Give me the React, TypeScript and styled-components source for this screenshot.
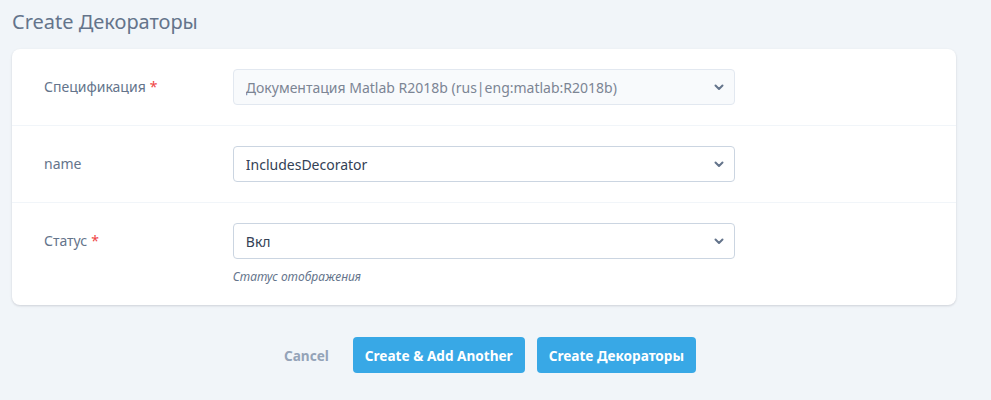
import React, { useState } from 'react';
import styled, { createGlobalStyle } from 'styled-components';

const GlobalStyle = createGlobalStyle`
  body {
    margin: 0;
    background: #f1f5f9;
    font-family: "Noto Sans", "Open Sans", sans-serif;
    color: #334155;
  }
`;

const Page = styled.div`
  padding: 10px 35px 0 12px;
  width: 944px;
`;

const Title = styled.h1`
  margin: 0 0 15px;
  font-size: 20px;
  font-weight: 400;
  line-height: 24px;
  color: #64748b;
`;

const Card = styled.div`
  background: #fff;
  border-radius: 8px;
  box-shadow: 0 1px 3px rgba(15, 23, 42, 0.1), 0 1px 2px rgba(15, 23, 42, 0.06);
`;

const Row = styled.div`
  display: flex;
  border-top: 1px solid #f1f5f9;
  &:first-child {
    border-top: none;
  }
`;

const LabelCol = styled.div`
  width: 20%;
  box-sizing: border-box;
  padding: 20px 32px 0;
  line-height: 34px;
`;

const Label = styled.label`
  font-size: 14px;
  color: #64748b;
`;

const Required = styled.span`
  color: #ef4444;
  margin-left: 4px;
`;

const FieldCol = styled.div`
  width: 60%;
  box-sizing: border-box;
  padding: 20px 32px;
`;

const SelectWrap = styled.div`
  position: relative;
`;

const Select = styled.select<{ $disabled?: boolean }>`
  appearance: none;
  display: block;
  width: 100%;
  height: 36px;
  box-sizing: border-box;
  padding: 0 36px 0 12px;
  border-radius: 4px;
  font-family: inherit;
  font-size: 14px;
  opacity: 1;
  color: ${p => (p.$disabled ? '#7c8594' : '#334155')};
  background: ${p => (p.$disabled ? '#f8fafc' : '#fff')};
  border: 1px solid ${p => (p.$disabled ? '#e2e8f0' : '#cbd5e1')};
  outline: none;
`;

const Chevron = styled.svg`
  position: absolute;
  right: 10px;
  top: 12px;
  pointer-events: none;
`;

const Help = styled.div`
  margin-top: 10px;
  font-size: 12px;
  font-style: italic;
  color: #64748b;
  line-height: 16px;
`;

const Actions = styled.div`
  display: flex;
  justify-content: center;
  align-items: center;
  gap: 12px;
  padding-top: 32px;
`;

const CancelButton = styled.button`
  background: none;
  border: none;
  font-family: inherit;
  font-size: 13.6px;
  font-weight: 700;
  color: #94a3b8;
  padding: 0 12px;
  height: 36px;
  cursor: pointer;
`;

const PrimaryButton = styled.button`
  background: #38a8e6;
  border: none;
  border-radius: 4px;
  font-family: inherit;
  font-size: 13.6px;
  font-weight: 700;
  color: #fff;
  height: 36px;
  padding: 0 12px;
  cursor: pointer;
`;

const ChevronIcon = () => (
  <Chevron width="12" height="12" viewBox="0 0 12 12">
    <path d="M2.5 4.5 L6 8 L9.5 4.5" fill="none" stroke="#64748b" strokeWidth="2" strokeLinecap="round" strokeLinejoin="round" />
  </Chevron>
);

const App = () => {
  const [name, setName] = useState('IncludesDecorator');
  const [status, setStatus] = useState('Вкл');

  return (
    <>
      <GlobalStyle />
      <Page>
        <Title>Create Декораторы</Title>
        <Card>
          <Row>
            <LabelCol>
              <Label>Спецификация<Required>*</Required></Label>
            </LabelCol>
            <FieldCol>
              <SelectWrap>
                <Select $disabled disabled>
                  <option>Документация Matlab R2018b (rus|eng:matlab:R2018b)</option>
                </Select>
                <ChevronIcon />
              </SelectWrap>
            </FieldCol>
          </Row>
          <Row>
            <LabelCol>
              <Label>name</Label>
            </LabelCol>
            <FieldCol>
              <SelectWrap>
                <Select value={name} onChange={e => setName(e.target.value)}>
                  <option>IncludesDecorator</option>
                </Select>
                <ChevronIcon />
              </SelectWrap>
            </FieldCol>
          </Row>
          <Row>
            <LabelCol>
              <Label>Статус<Required>*</Required></Label>
            </LabelCol>
            <FieldCol>
              <SelectWrap>
                <Select value={status} onChange={e => setStatus(e.target.value)}>
                  <option>Вкл</option>
                  <option>Выкл</option>
                </Select>
                <ChevronIcon />
              </SelectWrap>
              <Help>Статус отображения</Help>
            </FieldCol>
          </Row>
        </Card>
        <Actions>
          <CancelButton>Cancel</CancelButton>
          <PrimaryButton>Create &amp; Add Another</PrimaryButton>
          <PrimaryButton>Create Декораторы</PrimaryButton>
        </Actions>
      </Page>
    </>
  );
};

export default App;
